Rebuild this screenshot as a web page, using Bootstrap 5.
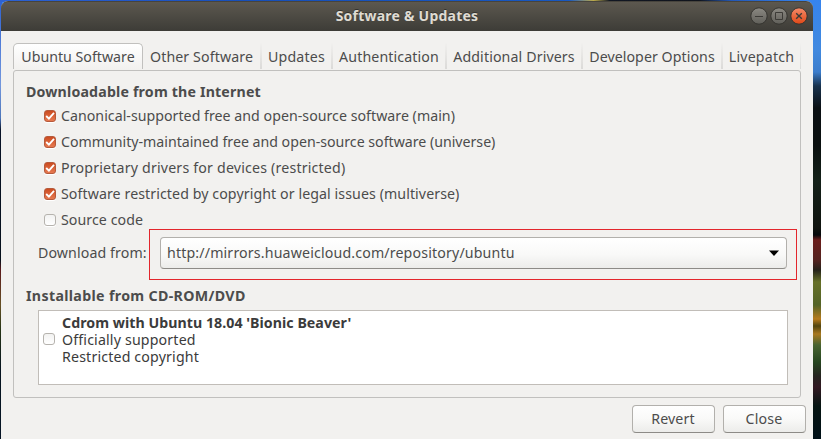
<!DOCTYPE html>
<html lang="en">
<head>
<meta charset="utf-8">
<title>Software &amp; Updates</title>
<meta name="viewport" content="width=device-width, initial-scale=1">
<link href="https://cdn.jsdelivr.net/npm/bootstrap@5.3.0/dist/css/bootstrap.min.css" rel="stylesheet">
<style>
body{font-family:"Noto Sans","Open Sans",sans-serif;font-size:14.2px;line-height:17px;color:#4c4c4c;height:439px;
background:linear-gradient(90deg,#2d62d2 0,#2358c8 15%,#174fb8 30%,#1858c0 70%,#bba94c 73%,#111723 75%,#10141c 86%,#2458b5 90%,#3684ee 99%) 0 0/813px 2px no-repeat,
linear-gradient(#2d62d2 0,#7397dd 85px,#4c75b9 118px,#091327 130px,#06101b 260px,#5b1a1b 270px,#665025 305px,#263416 330px,#06131f 370px,#061525) 0 0/2px 439px no-repeat,
linear-gradient(#3684ee 0,#4189df 50px,#3c7dcc 72px,#19324d 86px,#0b1014 108px,#0a100f 145px,#142119 180px,#10140f 228px,#05090c 235px,#6b1e1c 240px,#542320 260px,#25221a 270px,#667028 282px,#536327 305px,#b67a1c 319px,#514510 326px,#a97820 334px,#486431 345px,#264520 362px,#252420 376px,#321922 387px,#061512 406px,#001017 439px) 0 0/821px 439px no-repeat}
.app-window{width:812px;height:438px;margin:1px 0 0 1px;background:#f2f1ef;border-radius:7px 7px 0 0}
.titlebar{height:30px;background:linear-gradient(#5c584f,#3d3c37);border-top:1px solid #47443d;border-radius:7px 7px 0 0;color:#dfdbd2;padding-top:1px}
.titlebar h1{font-size:14px;line-height:26px;letter-spacing:.23px;text-shadow:0 -1px #33322e}
.win-controls{right:5px;top:5px;gap:2px}
.win-controls svg{width:18px;height:18px;display:block}
.tabstrip{height:27px;margin:12px 0 0 12px;width:788px}
.tabstrip .nav-link{height:26px;padding:0;color:#4c4c4c;line-height:27px;text-align:center;white-space:nowrap;border:0;border-radius:0;flex:none;border-right:2px solid;border-image:linear-gradient(#f2f1ef,#dad9d7) 1}
.tabstrip .nav-link.active{border:1px solid #c1c0be;border-bottom:0;border-image:none;border-radius:5px 5px 0 0;background:linear-gradient(#fff,#f2f1ef);color:#4c4c4c;line-height:26px}
.t1{width:130px}.t2{width:119px;letter-spacing:.1px}.t3{width:71px;letter-spacing:.2px}.t4{width:114px;letter-spacing:.12px}.t5{width:136px;letter-spacing:.12px}.t6{width:140px;letter-spacing:.06px}.t7{width:78px;letter-spacing:.2px}
.tabstrip .t7{border-right-width:1px}
.panel{width:788px;height:328px;margin-left:12px;border:1px solid #c1c0be;border-radius:3px;padding:12px 12px 0}
.panel h2{font-size:14.2px;line-height:18px;font-weight:700;margin:0;white-space:nowrap}
.panel .h-net{letter-spacing:.17px}
.panel .h-disc{letter-spacing:.34px;margin-top:7px}
.source-row{height:26px;padding-left:18px}
.source-row:first-child{margin-top:2px}
.source-row label{white-space:nowrap;margin-top:-2px}
.source-row .form-check-input,.disc-list .form-check-input{width:12px;height:12px;border:1px solid #b6b3ae;border-radius:3px;margin:0 5px 0 0;background:linear-gradient(#f2f2f1,#fff);flex:none;box-shadow:0 1px #fff}
.source-row .form-check-input:checked{border-color:#b65a3b;background:url("data:image/svg+xml,%3Csvg xmlns='http://www.w3.org/2000/svg' viewBox='0 0 10 10'%3E%3Cpath d='M1.2 5 3.9 7.6 9 1.8' fill='none' stroke='white' stroke-width='1.8'/%3E%3C/svg%3E") center/10px no-repeat,linear-gradient(#cb4b20,#e77a51)}
.ls-main{letter-spacing:.02px}.ls-universe{letter-spacing:-.015px}.ls-restricted{letter-spacing:.18px}.ls-multiverse{letter-spacing:.08px}.ls-source{letter-spacing:.06px}
.download-row{height:51px;padding-left:12px;margin-top:-4px;margin-right:-10px}
.download-row label{width:111px;margin-top:-5px;white-space:nowrap;letter-spacing:.1px}
.mirror-frame{width:648px;height:51px;border:1px solid #e3262c;padding:7px 10px}
.mirror-select{width:627px;height:32px;border:1px solid #b2b0ac;border-bottom-color:#8d8b87;border-radius:4px;background:linear-gradient(#fff,#f9f9f8 55%,#ececea);color:#4c4c4c;padding:0 7px 1px 6px;font-size:14.2px;letter-spacing:.15px}
.disc-list{width:750px;height:75px;margin:5px 0 0 12px;border:1px solid #c1bdb8;background:#fff;color:#3b3b3b;padding:3px 4px 0}
.disc-list .form-check-input{margin:19px 7px 0 0}
.disc-lines{white-space:nowrap;letter-spacing:.16px}
.disc-lines .fw-bold{letter-spacing:.04px}
.footer-buttons{gap:8px;padding:7px 7px 0 0}
.footer-buttons .btn{width:83px;height:28px;padding:0 1px 0 0;border:1px solid #b2b0ac;border-bottom-color:#8d8b87;border-radius:4px;background:linear-gradient(#fff,#f9f9f8 50%,#ececea);color:#4c4c4c;font-size:14.2px;line-height:26px;letter-spacing:.15px}
</style>
</head>
<body class="overflow-hidden">
<main class="app-window">
<header class="titlebar position-relative text-center">
<h1 class="fw-bold m-0">Software &amp; Updates</h1>
<div class="win-controls position-absolute d-flex">
<svg viewBox="0 0 18 18"><defs><linearGradient id="gray" x2="0" y2="1"><stop stop-color="#8b8982"/><stop offset="1" stop-color="#605f59"/></linearGradient><linearGradient id="orange" x2="0" y2="1"><stop stop-color="#f58b69"/><stop offset="1" stop-color="#df4716"/></linearGradient></defs><circle cx="9" cy="9" r="8.2" fill="url(#gray)" stroke="#353430"/><path d="M5 9.5h8" stroke="#3c3b37"/></svg>
<svg viewBox="0 0 18 18"><circle cx="9" cy="9" r="8.2" fill="url(#gray)" stroke="#353430"/><path d="M5.5 5.5h7v7h-7z" fill="none" stroke="#3c3b37"/></svg>
<svg viewBox="0 0 18 18"><circle cx="9" cy="9" r="8.2" fill="url(#orange)" stroke="#353430"/><path d="m6.2 6.2 5.6 5.6m0-5.6-5.6 5.6" stroke="#3c3b37" stroke-width="1.4"/></svg>
</div>
</header>
<nav class="tabstrip nav flex-nowrap">
<a class="nav-link active t1">Ubuntu Software</a><a class="nav-link t2">Other Software</a><a class="nav-link t3">Updates</a><a class="nav-link t4">Authentication</a><a class="nav-link t5">Additional Drivers</a><a class="nav-link t6">Developer Options</a><a class="nav-link t7">Livepatch</a>
</nav>
<section class="panel">
<h2 class="h-net">Downloadable from the Internet</h2>
<div>
<div class="source-row d-flex align-items-center"><input class="form-check-input" id="main" type="checkbox" checked><label class="ls-main" for="main">Canonical-supported free and open-source software (main)</label></div>
<div class="source-row d-flex align-items-center"><input class="form-check-input" id="universe" type="checkbox" checked><label class="ls-universe" for="universe">Community-maintained free and open-source software (universe)</label></div>
<div class="source-row d-flex align-items-center"><input class="form-check-input" id="restricted" type="checkbox" checked><label class="ls-restricted" for="restricted">Proprietary drivers for devices (restricted)</label></div>
<div class="source-row d-flex align-items-center"><input class="form-check-input" id="multiverse" type="checkbox" checked><label class="ls-multiverse" for="multiverse">Software restricted by copyright or legal issues (multiverse)</label></div>
<div class="source-row d-flex align-items-center"><input class="form-check-input" id="source" type="checkbox"><label class="ls-source" for="source">Source code</label></div>
</div>
<div class="download-row d-flex align-items-center"><label>Download from:</label>
<div class="mirror-frame"><button class="mirror-select d-flex align-items-center justify-content-between"><span>http://mirrors.huaweicloud.com/repository/ubuntu</span><svg width="10" height="6" viewBox="0 0 10 6"><path d="M0 .5h10L5 6z" fill="#000"/></svg></button></div></div>
<h2 class="h-disc">Installable from CD-ROM/DVD</h2>
<div class="disc-list d-flex align-items-start"><input class="form-check-input" type="checkbox" aria-label="Cdrom"><div class="disc-lines"><div class="fw-bold">Cdrom with Ubuntu 18.04 'Bionic Beaver'</div><div>Officially supported</div><div>Restricted copyright</div></div></div>
</section>
<footer class="footer-buttons d-flex justify-content-end"><button class="btn">Revert</button><button class="btn">Close</button></footer>
</main>
<script src="https://cdn.jsdelivr.net/npm/bootstrap@5.3.0/dist/js/bootstrap.bundle.min.js"></script>
</body>
</html>
